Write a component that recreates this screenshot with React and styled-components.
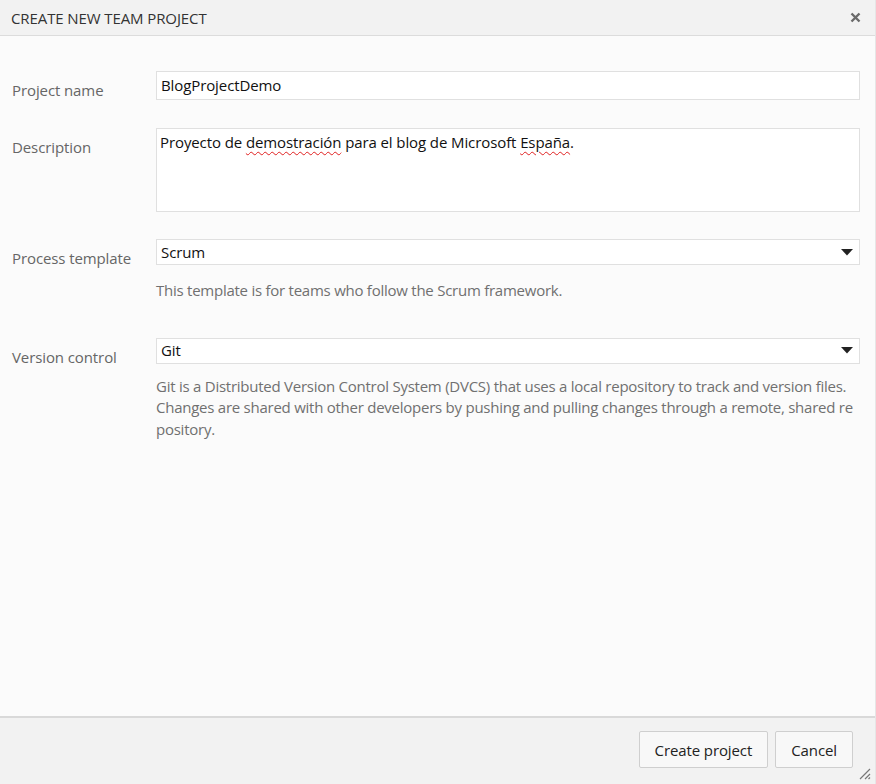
import React from 'react';
import styled, { createGlobalStyle } from 'styled-components';

const GlobalStyle = createGlobalStyle`
  html, body {
    margin: 0;
    padding: 0;
    background: #fbfbfb;
  }
  body {
    font-family: "Open Sans", "Noto Sans", Arial, sans-serif;
  }
`;

const Dialog = styled.div`
  width: 876px;
  height: 784px;
  display: flex;
  flex-direction: column;
  background: #fbfbfb;
  box-sizing: border-box;
  border-right: 1px solid #e6e6e6;
  font-size: 15px;
  letter-spacing: -0.1px;
`;

const Header = styled.div`
  height: 35px;
  flex: none;
  display: flex;
  align-items: center;
  justify-content: space-between;
  padding: 0 14px 0 11px;
  background: #f2f2f2;
  border-bottom: 1px solid #dcdcdc;
`;

const Title = styled.span`
  font-size: 15px;
  color: #333;
`;

const CloseButton = styled.span`
  display: flex;
  align-items: center;
  cursor: pointer;
`;

const Body = styled.div`
  flex: 1;
  padding: 35px 15px 0 12px;
`;

const Row = styled.div`
  display: grid;
  grid-template-columns: 144px 1fr;
  margin-bottom: ${({ gap }) => gap}px;
`;

const Label = styled.label`
  padding-top: 9px;
  color: #666;
  font-size: 15px;
  line-height: 21px;
`;

const Field = styled.div`
  display: flex;
  flex-direction: column;
`;

const TextBox = styled.div`
  box-sizing: border-box;
  height: ${({ h }) => h}px;
  border: 1px solid #e0e0e0;
  background: #fff;
  padding: ${({ multi }) => (multi ? '3px 3px' : '0 4px')};
  display: flex;
  align-items: ${({ multi }) => (multi ? 'flex-start' : 'center')};
  color: #111;
  font-size: 15px;
  line-height: 21px;
`;

const Select = styled(TextBox)`
  justify-content: space-between;
  padding-right: 6px;
`;

const Spell = styled.span`
  text-decoration: underline wavy #e02020;
  text-decoration-thickness: 1px;
  text-underline-offset: 3px;
`;

const Hint = styled.p`
  margin: ${({ top }) => top}px 0 0;
  color: #707070;
  font-size: 15px;
  line-height: 21.5px;
  letter-spacing: -0.25px;
  word-break: break-all;
`;

const Footer = styled.div`
  height: 68px;
  flex: none;
  box-sizing: border-box;
  background: #f2f2f2;
  border-top: 2px solid #d9d9d9;
  display: flex;
  justify-content: flex-end;
  align-items: flex-start;
  gap: 7px;
  padding: 13px 22px 0 0;
  position: relative;
`;

const Button = styled.button`
  height: 37px;
  padding: 0 ${({ pad }) => pad}px;
  border: 1px solid #cfcfcf;
  border-radius: 2px;
  background: #f8f8f8;
  color: #222;
  font-family: "Open Sans", "Noto Sans", Arial, sans-serif;
  font-size: 15px;
  letter-spacing: -0.1px;
  cursor: pointer;
`;

const Grip = styled.svg`
  position: absolute;
  right: 4px;
  bottom: 4px;
`;

const Arrow = () => (
  <svg width="12" height="7" viewBox="0 0 12 7">
    <path d="M0 0 H12 L6 6.5 Z" fill="#222" />
  </svg>
);

export default function App() {
  return (
    <>
      <GlobalStyle />
      <Dialog>
        <Header>
          <Title>CREATE NEW TEAM PROJECT</Title>
          <CloseButton>
            <svg width="11" height="11" viewBox="0 0 11 11">
              <path d="M1.5 1.5 L9.5 9.5 M9.5 1.5 L1.5 9.5" stroke="#6a6a6a" strokeWidth="2.4" />
            </svg>
          </CloseButton>
        </Header>
        <Body>
          <Row gap={27}>
            <Label>Project name</Label>
            <Field>
              <TextBox h={29}>BlogProjectDemo</TextBox>
            </Field>
          </Row>
          <Row gap={27}>
            <Label>Description</Label>
            <Field>
              <TextBox h={84} multi>
                <span>
                  Proyecto de <Spell>demostración</Spell> para el blog de Microsoft <Spell>España</Spell>.
                </span>
              </TextBox>
            </Field>
          </Row>
          <Row gap={36}>
            <Label>Process template</Label>
            <Field>
              <Select h={26}>
                Scrum
                <Arrow />
              </Select>
              <Hint top={15}>This template is for teams who follow the Scrum framework.</Hint>
            </Field>
          </Row>
          <Row gap={0}>
            <Label>Version control</Label>
            <Field>
              <Select h={26}>
                Git
                <Arrow />
              </Select>
              <Hint top={12}>
                Git is a Distributed Version Control System (DVCS) that uses a local repository to track and version files.
                <br />
                Changes are shared with other developers by pushing and pulling changes through a remote, shared repository.
              </Hint>
            </Field>
          </Row>
        </Body>
        <Footer>
          <Button pad={15}>Create project</Button>
          <Button pad={15}>Cancel</Button>
          <Grip width="14" height="14" viewBox="0 0 14 14">
            <path d="M13 3 L3 13 M13 8 L8 13 M13 11.5 L11.5 13" stroke="#777" strokeWidth="1.2" />
          </Grip>
        </Footer>
      </Dialog>
    </>
  );
}
